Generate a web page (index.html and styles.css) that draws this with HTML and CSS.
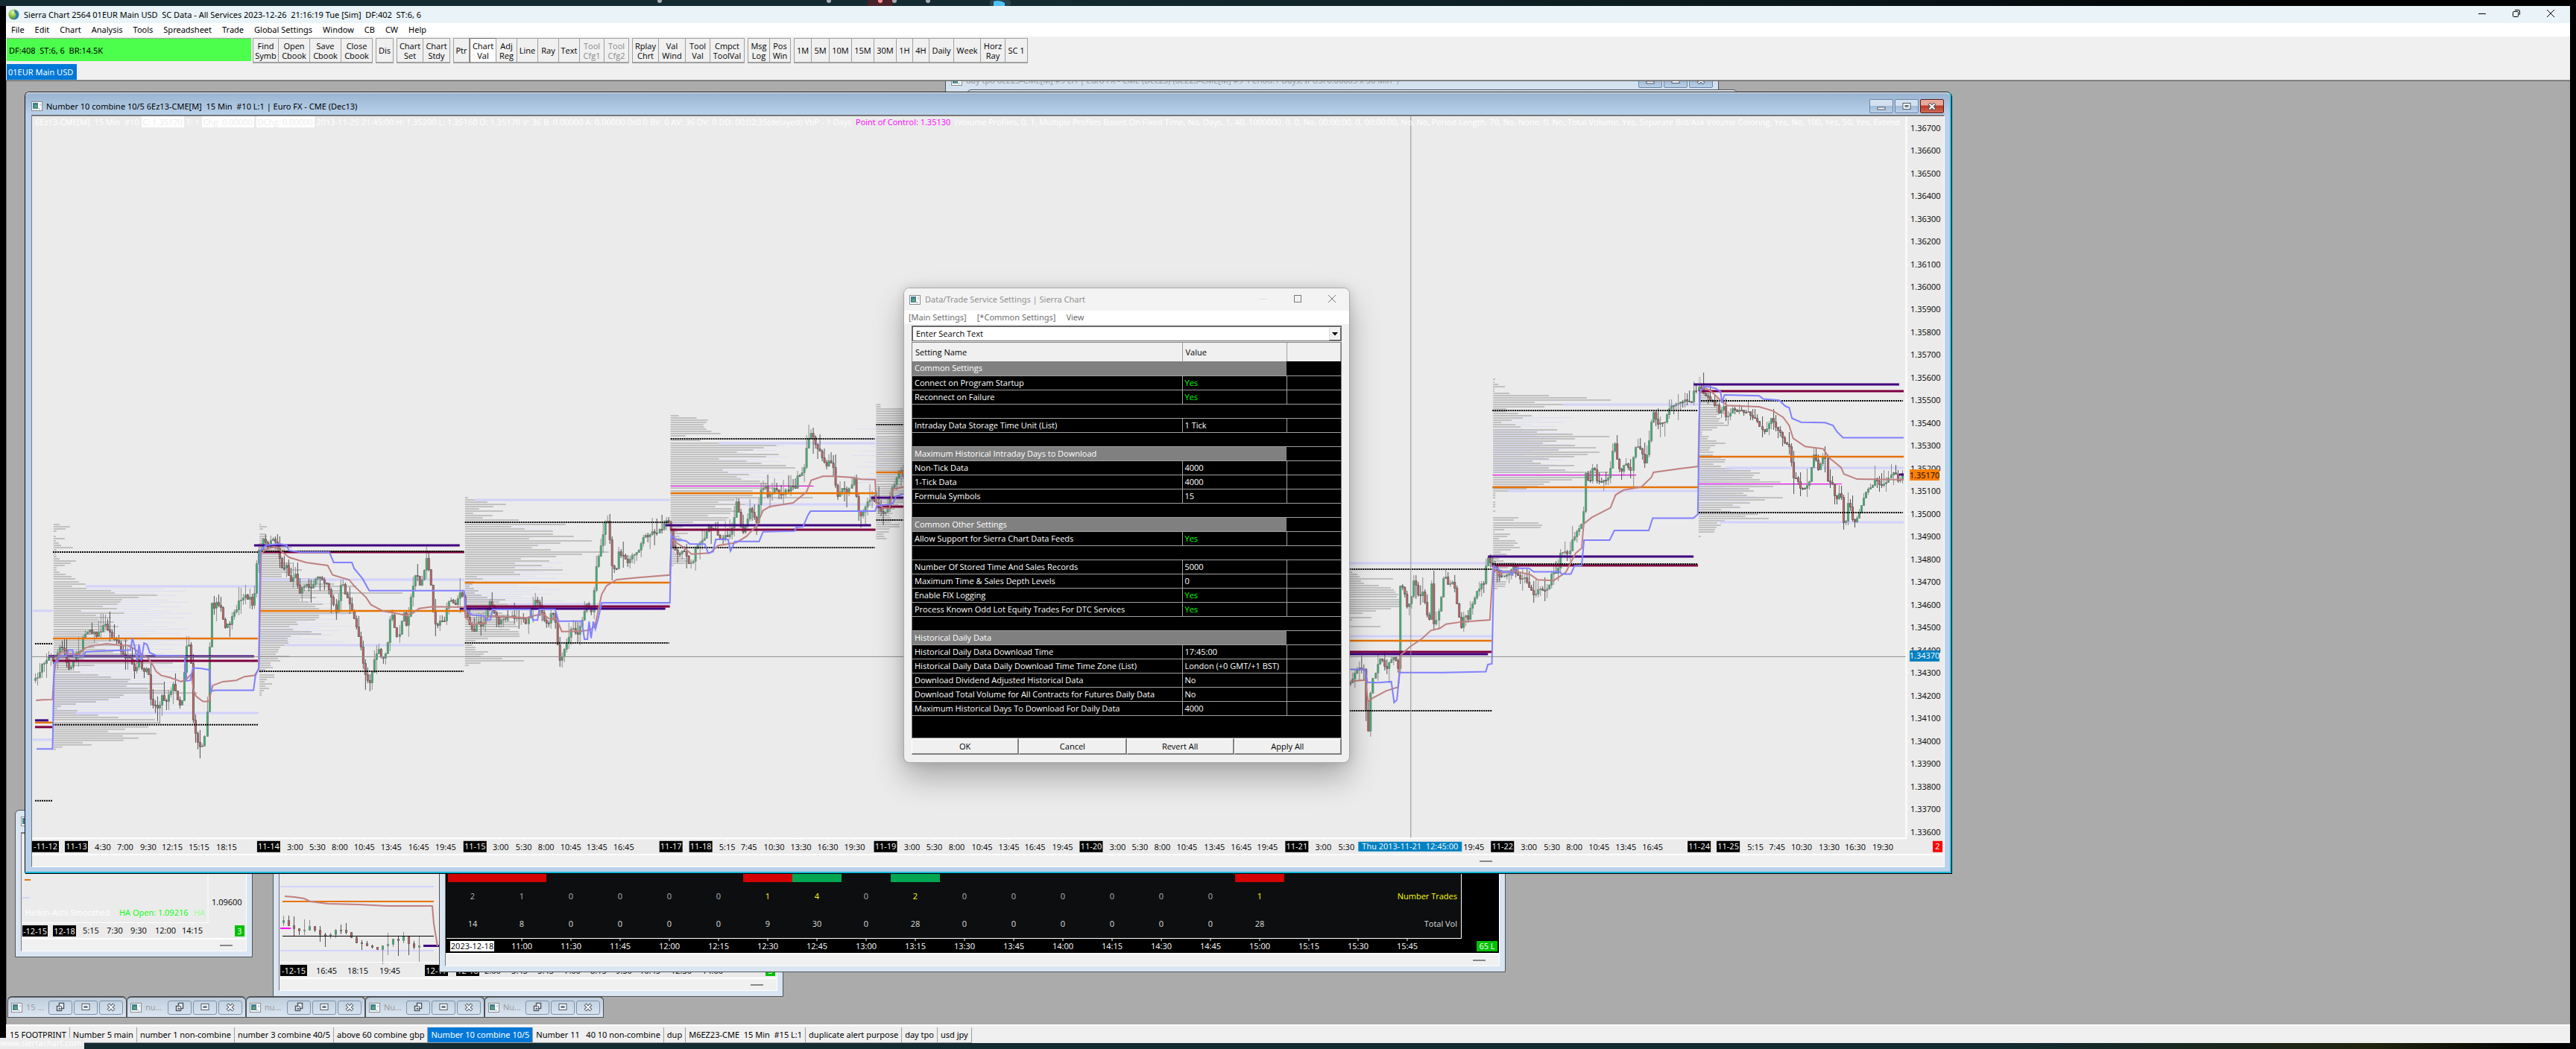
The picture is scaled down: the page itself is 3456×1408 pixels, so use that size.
FILE: index.html
```html
<!DOCTYPE html>
<html lang="en">
<head>
<meta charset="utf-8">
<title>Sierra Chart</title>
<link rel="stylesheet" href="styles.css">
</head>
<body>
<svg class="defs" aria-hidden="true">
  <symbol id="doc" viewBox="0 0 15 13"><rect x=".5" y=".5" width="14" height="12" fill="#fff" stroke="#8a8a8a"/><rect x="2" y="2" width="7" height="8" fill="#3f7f8f"/><rect x="4" y="5" width="4" height="4" fill="#5fa07c"/><path d="M11 3h2v3h-2zM9 9h3v2H9z" fill="#c9d2d8"/></symbol>
  <symbol id="restore" viewBox="0 0 14 14"><path d="M5.500 1.500h6v7h-3v3h-6v-6h3z" fill="#fff" stroke="#4c5766" stroke-width="1.500"/><path d="M5.500 5.500h3v3M5 8h1.500v1.500H5z" fill="none" stroke="#4c5766"/></symbol>
  <symbol id="max" viewBox="0 0 14 14"><rect x="2" y="2.500" width="10" height="8" fill="#fff" stroke="#4c5766"/><rect x="5" y="5.500" width="4" height="2" fill="#9fb4cc" stroke="#4c5766"/></symbol>
  <symbol id="min" viewBox="0 0 14 14"><rect x="2" y="8" width="10" height="3" fill="#fff" stroke="#4c5766"/></symbol>
  <symbol id="x" viewBox="0 0 14 14"><path d="M3 3l8 8M11 3l-8 8" stroke="#4c5766" stroke-width="4"/><path d="M3.500 3.500l7 7M10.500 3.500l-7 7" stroke="#fff" stroke-width="2"/></symbol>
</svg>
<div class="desktop-top">
  <svg width="1400" height="8" viewBox="0 0 1400 8"><rect x="1164" width="34" height="8" rx="3" fill="#4a2228"/><rect x="1328" width="28" height="8" rx="3" fill="#28434b"/><path d="M1333 2q8-3 15 2v4h-15z" fill="#4cc2ff"/><g fill="#a8aeb0"><circle cx="885" cy="1" r="3"/><circle cx="1112" cy="1" r="3"/><circle cx="1200" cy="1" r="3"/><circle cx="1245" cy="1" r="3"/></g><circle cx="1181" cy="1" r="3" fill="#ff8f8f"/></svg>
</div>
<div class="app">
  <header class="titlebar">
    <svg class="globe" viewBox="0 0 16 16"><defs><radialGradient id="gl" cx=".4" cy=".3" r=".8"><stop offset="0" stop-color="#e9f7b0"/><stop offset=".45" stop-color="#8cc63f"/><stop offset="1" stop-color="#1c5f8c"/></radialGradient></defs><circle cx="8" cy="8" r="7.500" fill="url(#gl)"/><path d="M9 1q6 2 6 7 0 4-4 7-2-3 0-5 1-3-2-5z" fill="#2d7db3"/></svg>
    <h1>Sierra Chart 2564 01EUR Main USD&nbsp; SC Data - All Services 2023-12-26&nbsp; 21:16:19 Tue [Sim]&nbsp; DF:402&nbsp; ST:6, 6</h1>
    <div class="syswin">
      <button aria-label="Minimize"><svg viewBox="0 0 12 12"><path d="M1 6.500h10" stroke="#000"/></svg></button>
      <button aria-label="Restore"><svg viewBox="0 0 12 12"><rect x="1.500" y="3.500" width="7" height="7" rx="1" fill="none" stroke="#000"/><path d="M4 1.500h5q1.500 0 1.500 1.500v5" fill="none" stroke="#000"/></svg></button>
      <button aria-label="Close"><svg viewBox="0 0 12 12"><path d="M1 1l10 10M11 1L1 11" stroke="#000"/></svg></button>
    </div>
  </header>
  <nav class="menubar"><a href="#">File</a><a href="#">Edit</a><a href="#">Chart</a><a href="#">Analysis</a><a href="#">Tools</a><a href="#">Spreadsheet</a><a href="#">Trade</a><a href="#">Global Settings</a><a href="#">Window</a><a href="#">CB</a><a href="#">CW</a><a href="#">Help</a></nav>
  <div class="toolbar">
    <div class="feed">DF:408&nbsp; ST:6, 6&nbsp; BR:14.5K</div>
    <div class="group"><button class="w35">Find<br>Symb</button><button class="w42">Open<br>Cbook</button><button class="w42">Save<br>Cbook</button><button class="w42">Close<br>Cbook</button></div>
    <div class="group"><button class="w24">Dis</button></div>
    <div class="group"><button class="w36">Chart<br>Set</button><button class="w36">Chart<br>Stdy</button></div>
    <div class="group"><button class="w22">Ptr</button><button class="w36 pressed">Chart<br>Val</button><button class="w28">Adj<br>Reg</button><button class="w28">Line</button><button class="w28">Ray</button><button class="w28">Text</button><button class="w32" disabled>Tool<br>Cfg1</button><button class="w32" disabled>Tool<br>Cfg2</button></div>
    <div class="group"><button class="w36">Rplay<br>Chrt</button><button class="w36">Val<br>Wind</button><button class="w32">Tool<br>Val</button><button class="w46">Cmpct<br>ToolVal</button></div>
    <div class="group"><button class="w30">Msg<br>Log</button><button class="w28">Pos<br>Win</button></div>
    <div class="group"><button class="w24">1M</button><button class="w24">5M</button><button class="w30">10M</button><button class="w30">15M</button><button class="w30">30M</button><button class="w22">1H</button><button class="w22">4H</button><button class="w32">Daily</button><button class="w36">Week</button><button class="w32">Horz<br>Ray</button><button class="w30">SC 1</button></div>
  </div>
  <div class="booktabs"><button>01EUR Main USD</button></div>

  <main class="mdi">
    <section class="win tpo">
      <div class="caption"><svg class="ic"><use href="#doc"/></svg><span>day tpo 6EZ23-CME[M] #9 LH | Euro FX - CME (Dec23) (6EZ23-CME[M] #9&nbsp; Period:1 Days, IPUSF0.00005 x 30 Min&nbsp; )</span><div class="ctl"><button aria-label="Minimize"><svg><use href="#min"/></svg></button><button aria-label="Maximize"><svg><use href="#max"/></svg></button><button aria-label="Close"><svg><use href="#x"/></svg></button></div></div>
    </section>
    <section class="win edge"></section>

    <section class="win heikin">
      <div class="caption"><svg class="ic"><use href="#doc"/></svg></div>
      <div class="client">
        <svg class="plot" id="heikin" viewBox="29 1119 301 140"></svg>
        <div class="foot"><i></i></div>
      </div>
    </section>

    <section class="win small">
      <div class="client">
        <svg class="plot" id="small" viewBox="375 1172 667 140"></svg>
        <div class="foot"><i></i></div>
      </div>
    </section>

    <section class="win numbers">
      <div class="client">
        <svg class="plot" id="numbers" viewBox="598 1172 1413 107"></svg>
        <div class="foot"><i></i></div>
      </div>
    </section>

    <section class="win main">
      <div class="caption"><svg class="ic"><use href="#doc"/></svg><span>Number 10 combine 10/5 6Ez13-CME[M]&nbsp; 15 Min&nbsp; #10 L:1 | Euro FX - CME (Dec13)</span><div class="ctl"><button aria-label="Minimize"><svg><use href="#min"/></svg></button><button aria-label="Maximize"><svg><use href="#max"/></svg></button><button class="close" aria-label="Close"><svg><use href="#x"/></svg></button></div></div>
      <div class="client">
        <svg class="plot" id="chart" viewBox="43 156 2566 990"></svg>
        <div class="info">6Ez13-CME[M]&nbsp; 15 Min&nbsp; #10 <mark>C: 1.35170</mark> T: 1 <mark>Chg: 0.00000</mark> <mark>DChg: 0.00000</mark> 2013-11-25 21:45:00 H: 1.35200 L: 1.35160 O: 1.35170 V: 36 B: 0.00000 A: 0.00000 0x0 0 BV: 0 AV: 36 DV: 0 DD: 00:02:35(delayed) VbP - 1 Days&nbsp; <b>Point of Control: 1.35130</b>&nbsp; (Volume Profiles, 0, 1, Multiple Profiles Based On Fixed Time, No, Days, 1, 40, 1000000, 0, 0, No, 00:00:00, 0, 00:00:00, No, No, Period Length, 70, No, None, 0, No, Total Volume, Yes, Separate Bid/Ask Volume Coloring, Yes, No, 100, Yes, 50, Yes, Extend</div>
        <div class="foot"><i></i></div>
      </div>
    </section>

    <div class="iconized">
      <div class="mini"><svg class="ic"><use href="#doc"/></svg><span>15 ...</span><button aria-label="Restore"><svg><use href="#restore"/></svg></button><button aria-label="Maximize"><svg><use href="#max"/></svg></button><button aria-label="Close"><svg><use href="#x"/></svg></button></div>
      <div class="mini"><svg class="ic"><use href="#doc"/></svg><span>nu...</span><button aria-label="Restore"><svg><use href="#restore"/></svg></button><button aria-label="Maximize"><svg><use href="#max"/></svg></button><button aria-label="Close"><svg><use href="#x"/></svg></button></div>
      <div class="mini"><svg class="ic"><use href="#doc"/></svg><span>nu...</span><button aria-label="Restore"><svg><use href="#restore"/></svg></button><button aria-label="Maximize"><svg><use href="#max"/></svg></button><button aria-label="Close"><svg><use href="#x"/></svg></button></div>
      <div class="mini"><svg class="ic"><use href="#doc"/></svg><span>Nu...</span><button aria-label="Restore"><svg><use href="#restore"/></svg></button><button aria-label="Maximize"><svg><use href="#max"/></svg></button><button aria-label="Close"><svg><use href="#x"/></svg></button></div>
      <div class="mini"><svg class="ic"><use href="#doc"/></svg><span>Nu...</span><button aria-label="Restore"><svg><use href="#restore"/></svg></button><button aria-label="Maximize"><svg><use href="#max"/></svg></button><button aria-label="Close"><svg><use href="#x"/></svg></button></div>
    </div>

    <section class="dialog" role="dialog" aria-label="Data/Trade Service Settings">
      <div class="dtitle"><svg class="ic"><use href="#doc"/></svg><h2>Data/Trade Service Settings | Sierra Chart</h2>
        <button aria-label="Minimize"><svg viewBox="0 0 12 12"><path d="M1 6.500h10" stroke="#ddd"/></svg></button>
        <button aria-label="Maximize"><svg viewBox="0 0 12 12"><rect x="1.500" y="1.500" width="9" height="9" fill="none" stroke="#777"/></svg></button>
        <button aria-label="Close"><svg viewBox="0 0 12 12"><path d="M1 1l10 10M11 1L1 11" stroke="#777"/></svg></button></div>
      <nav class="dmenu"><a href="#">[Main Settings]</a><a href="#">[*Common Settings]</a><a href="#">View</a></nav>
      <div class="dbody">
        <div class="combo"><input type="text" value="Enter Search Text" aria-label="Search settings"><button aria-label="Show searches"><svg viewBox="0 0 8 5"><path d="M0 0h8L4 4.500z"/></svg></button></div>
        <div class="tablebox">
        <table>
          <colgroup><col class="c1"><col class="c2"><col></colgroup>
          <thead><tr><th>Setting Name</th><th>Value</th><th></th></tr></thead>
          <tbody>
          <tr class="sec"><td colspan="2">Common Settings</td><td></td></tr>
          <tr><td>Connect on Program Startup</td><td class="yes">Yes</td><td></td></tr>
          <tr><td>Reconnect on Failure</td><td class="yes">Yes</td><td></td></tr>
          <tr><td colspan="3"></td></tr>
          <tr><td>Intraday Data Storage Time Unit (List)</td><td>1 Tick</td><td></td></tr>
          <tr><td colspan="3"></td></tr>
          <tr class="sec"><td colspan="2">Maximum Historical Intraday Days to Download</td><td></td></tr>
          <tr><td>Non-Tick Data</td><td>4000</td><td></td></tr>
          <tr><td>1-Tick Data</td><td>4000</td><td></td></tr>
          <tr><td>Formula Symbols</td><td>15</td><td></td></tr>
          <tr><td colspan="3"></td></tr>
          <tr class="sec"><td colspan="2">Common Other Settings</td><td></td></tr>
          <tr><td>Allow Support for Sierra Chart Data Feeds</td><td class="yes">Yes</td><td></td></tr>
          <tr><td colspan="3"></td></tr>
          <tr><td>Number Of Stored Time And Sales Records</td><td>5000</td><td></td></tr>
          <tr><td>Maximum Time &amp; Sales Depth Levels</td><td>0</td><td></td></tr>
          <tr><td>Enable FIX Logging</td><td class="yes">Yes</td><td></td></tr>
          <tr><td>Process Known Odd Lot Equity Trades For DTC Services</td><td class="yes">Yes</td><td></td></tr>
          <tr><td colspan="3"></td></tr>
          <tr class="sec"><td colspan="2">Historical Daily Data</td><td></td></tr>
          <tr><td>Historical Daily Data Download Time</td><td>17:45:00</td><td></td></tr>
          <tr><td>Historical Daily Data Daily Download Time Time Zone (List)</td><td>London (+0 GMT/+1 BST)</td><td></td></tr>
          <tr><td>Download Dividend Adjusted Historical Data</td><td>No</td><td></td></tr>
          <tr><td>Download Total Volume for All Contracts for Futures Daily Data</td><td>No</td><td></td></tr>
          <tr><td>Maximum Historical Days To Download For Daily Data</td><td>4000</td><td></td></tr>
          </tbody>
        </table>
        </div>
        <div class="dbuttons"><button>OK</button><button>Cancel</button><button>Revert All</button><button>Apply All</button></div>
      </div>
    </section>
  </main>

  <nav class="charttabs"><button>15 FOOTPRINT</button><button>Number 5 main</button><button>number 1 non-combine</button><button>number 3 combine 40/5</button><button>above 60 combine gbp</button><button class="on">Number 10 combine 10/5</button><button>Number 11&nbsp;&nbsp; 40 10 non-combine</button><button>dup</button><button>M6EZ23-CME&nbsp; 15 Min&nbsp; #15 L:1</button><button>duplicate alert purpose</button><button>day tpo</button><button>usd jpy</button></nav>
</div>
<div class="desktop-bottom"></div>
<div class="linktip">www.sierrachart.com</div>
<script src="charts.js"></script>
</body>
</html>
```
FILE: styles.css
```css
* { box-sizing: border-box; }
body {
  margin: 0;
  min-height: 100vh;
  display: flex;
  flex-direction: column;
  background: #000;
  color: #000;
  font: 11px/14px "Open Sans", "Noto Sans", sans-serif;
  overflow: hidden;
}
button, input { font: inherit; color: inherit; }
button { padding: 0; border: 0; background: none; }
a { color: inherit; text-decoration: none; }
h1, h2 { margin: 0; font: inherit; }
.defs { position: absolute; width: 0; height: 0; }
.titlebar, .menubar, .feed, .caption, .charttabs, .booktabs, .dtitle, .dmenu, .linktip { font-family: "Noto Sans", "Open Sans", sans-serif; }

.desktop-top { height: 8px; background: linear-gradient(90deg, #132b31 0 40%, #0a181c 70%, #000 90%); }
.desktop-top svg { display: block; }
.desktop-bottom { height: 8px; background: linear-gradient(90deg, #132b31 0 78%, #20240f 92%, #000 99%); }
.app {
  flex: 1;
  margin: 0 8px;
  display: flex;
  flex-direction: column;
  background: #f0f0f0;
}
.titlebar {
  height: 23px;
  display: flex;
  align-items: center;
  gap: 6px;
  padding: 0 3px;
  background: #eaf4f8;
}
.titlebar h1 { flex: 1; }
.globe { width: 15px; height: 15px; }
.syswin { display: flex; }
.syswin button { width: 46px; height: 20px; }
.syswin svg { width: 12px; height: 12px; }
.menubar { height: 18px; display: flex; background: #fff; line-height: 18px; }
.menubar a { padding: 0 7px; }

.toolbar { height: 36px; padding: 2px 0 0 1px; display: flex; gap: 4px; }
.feed { width: 328px; height: 31px; padding-left: 3px; line-height: 31px; background: #4cff4c; border-top: 1px solid #a0a0a0; margin-right: -2px; }
.group { display: flex; height: 34px; }
.group button {
  border-top: 1px solid #a0a0a0;
  border-bottom: 2px solid #a0a0a0;
  border-right: 1px solid #a0a0a0;
  line-height: 13px;
  text-align: center;
  white-space: nowrap;
}
.group button:first-child { border-left: 1px solid #a0a0a0; }
.group button:disabled { color: #8a8a8a; }
.group .pressed { background: #fbfbfb; border-left: 1px solid #696969; border-top-color: #696969; }
.w22 { width: 22px; } .w24 { width: 24px; } .w28 { width: 28px; } .w30 { width: 30px; }
.w32 { width: 33px; } .w35 { width: 35px; } .w36 { width: 36px; } .w42 { width: 42px; } .w46 { width: 46px; }

.booktabs { height: 23px; padding: 1px; border-bottom: 1px solid #a0a0a0; }
.booktabs button { height: 21px; padding: 0 5px 0 2px; background: #0078d7; color: #fff; }

.mdi { flex: 1; position: relative; overflow: hidden; background: #ababab; border: 1px solid #696969; border-width: 1px 0 0 1px; }
.win { position: absolute; display: flex; flex-direction: column; border: 1px solid #505458; border-radius: 6px 6px 0 0; background: #d9e5f2; padding: 0 7px 7px; }
.caption { display: flex; align-items: center; gap: 5px; }
.caption span { flex: 1; white-space: nowrap; }
.ic { width: 15px; height: 13px; flex: none; }
.ctl { display: flex; gap: 2px; }
.ctl button { width: 32px; height: 19px; border: 1px solid #6d84a3; border-radius: 2px; background: linear-gradient(#d3e0ef 45%, #a4bcd8 50%, #b9cfe7); display: flex; justify-content: center; align-items: center; }
.ctl .close { background: linear-gradient(#e9a99a 40%, #b93a26 50%, #cf6a52); border-color: #5c1a1e; }
.ctl svg { width: 14px; height: 14px; }
.client { flex: 1; min-height: 0; position: relative; display: flex; flex-direction: column; border: 1px solid #fff; border-top: 2px solid #777; border-left-color: #777; background: #ebebeb; }
.plot { flex: 1; min-height: 0; width: 100%; display: block; }
.plot text { font: 11px "Open Sans", "Noto Sans", sans-serif; }
.foot { flex: none; height: 17px; border-top: 2px solid #fff; background: #f0f0f0; display: flex; justify-content: flex-end; align-items: center; padding-right: 18px; }
.foot i { width: 17px; height: 2px; background: #888; }

.main { left: 24px; top: 14px; width: 2585px; height: 1049px; border-color: #111; border-right: 2px solid #18b8d8; border-bottom: 2px solid #18b8d8; background: #b9d1ea; box-shadow: 1px 1px 0 #000; padding: 0 7px 6px 8px; }
.main .caption { height: 30px; margin: 0 -7px 0 -8px; padding: 6px 8px 0; background: linear-gradient(#99b4d1, #b9d1ea); border-radius: 5px 5px 0 0; border-top: 1px solid #fff; }
.main .foot { padding-right: 606px; }
.info { position: absolute; top: 0; left: 4px; width: 2510px; height: 15px; line-height: 15px; overflow: hidden; white-space: nowrap; color: #fff; }
.info mark { display: inline-block; padding: 0 2px; background: #fff; color: #ebebeb; }
.info b { font-weight: 400; color: #f0f; }

.tpo { left: 1259px; top: -14px; width: 1038px; height: 60px; color: #999; background: #d4e1ef; }
.tpo .caption { height: 24px; }
.edge { left: 1288px; top: 11px; width: 1034px; height: 40px; }
.heikin { left: 11px; top: 978px; width: 319px; height: 198px; }
.heikin .caption { height: 29px; }
.small { left: 357px; top: 1040px; width: 685px; height: 189px; }
.numbers { left: 580px; top: 1040px; width: 1431px; height: 156px; }
.numbers .client { background: #000; }
.small .client, .numbers .client { border-top: 0; margin-top: 22px; }

.iconized { position: absolute; left: 1px; bottom: 9px; display: flex; }
.mini { width: 160px; height: 29px; display: flex; align-items: center; padding: 0 4px; gap: 2px; color: #999; background: linear-gradient(#bfcddb, #dbe6f2); border: 1px solid #505458; border-top-width: 2px; border-radius: 6px 6px 0 0; }
.mini span { flex: 1; padding-left: 3px; }
.mini button { width: 32px; height: 19px; border: 1px solid #7c92ae; border-radius: 3px; display: flex; align-items: center; justify-content: center; }
.mini button svg { width: 14px; height: 14px; }

.dialog { position: absolute; left: 1203px; top: 277px; width: 599px; display: flex; flex-direction: column; background: #f0f0f0; border: 1px solid #a8a8a8; border-radius: 8px; overflow: hidden; box-shadow: 0 20px 40px rgba(0,0,0,.28), 0 0 14px rgba(0,0,0,.12); }
.dtitle { height: 30px; display: flex; align-items: center; padding-left: 7px; background: #f3f3f3; color: #909090; }
.dtitle h2 { flex: 1; padding-left: 6px; }
.dtitle button { width: 46px; height: 28px; }
.dtitle button svg { width: 12px; height: 12px; }
.dmenu { height: 18px; padding-left: 6px; display: flex; gap: 14px; background: #fff; color: #6d6d6d; line-height: 18px; }
.dbody { padding: 2px 10px 10px; }
.combo { height: 21px; display: flex; border: 1px solid #696969; border-width: 2px 1px 1px 2px; background: #fff; margin-bottom: 1px; }
.combo input { flex: 1; min-width: 0; border: 0; padding: 0 4px; outline: 0; background: none; }
.combo button { width: 16px; background: #f0f0f0; border: 1px solid #696969; border-top-color: #fff; border-left-color: #ddd; display: grid; place-items: center; }
.combo svg { width: 8px; height: 5px; }
.tablebox { height: 532px; border: 1px solid #808080; background: #000; }
table { width: 100%; border-collapse: collapse; table-layout: fixed; color: #fff; }
.c1 { width: 362px; } .c2 { width: 140px; }
th { height: 25px; padding: 0 4px; background: #f0f0f0; color: #000; font-weight: 400; text-align: left; border-right: 1px solid #a0a0a0; }
td { height: 19px; padding: 0 3px; border-bottom: 1px solid #a0a0a0; border-right: 1px solid #a0a0a0; white-space: nowrap; line-height: 14px; }
td:last-child { border-right: 0; }
.sec td:first-child { background: #808080; border-right: 0; }
.yes { color: #0f0; }
.dbuttons { display: flex; }
.dbuttons button { flex: 1; height: 22px; background: #f0f0f0; border: 1px solid #fff; border-right: 2px solid #808080; border-bottom: 2px solid #808080; }

.charttabs { height: 25px; padding: 2px 0 0 1px; display: flex; border-top: 2px solid #fff; }
.charttabs button { padding: 0 4px; border-right: 1px solid #a0a0a0; border-bottom: 1px solid #a0a0a0; }
.charttabs .on { background: #0078d7; color: #fff; }
.linktip { position: absolute; left: 0; bottom: 0; height: 15px; width: 113px; background: #ebebeb; color: #fff; }
```
FILE: charts.js
```js
const NS = 'http://www.w3.org/2000/svg';
let seed = 7;
const rnd = () => (seed = (seed * 16807) % 2147483647) / 2147483647;

function el(svg, name, attrs, text) {
  const e = document.createElementNS(NS, name);
  for (const k in attrs) e.setAttribute(k, attrs[k]);
  if (text !== undefined) e.textContent = text;
  svg.appendChild(e);
  return e;
}
const path = (svg, d, color, w, dash) =>
  el(svg, 'path', { d, stroke: color, 'stroke-width': w, fill: 'none', 'stroke-dasharray': dash || 'none' });
const rect = (svg, x, y, w, h, fill) => el(svg, 'rect', { x, y, width: w, height: h, fill });
const label = (svg, x, y, t, fill = '#000', anchor = 'middle') =>
  el(svg, 'text', { x, y: y + 4, fill, 'text-anchor': anchor }, t);
function tag(svg, x, y, w, h, t, bg, fg) {
  rect(svg, x, y, w, h, bg);
  label(svg, x + w / 2, y + h / 2, t, fg);
}

// Blocks of the series keep their own units: origin plus scale.
const A = { x: 0, y: 640, sx: 2.24, sy: 3 };
const B = { x: 600, y: 520, sx: 2.24, sy: 2.45 };
const C = { x: 1780, y: 480, sx: 1.867, sy: 2.306 };
const pts = (b, s) => s.trim().split(/[;\s]+/).map(p => {
  const [x, y] = p.split(',').map(Number);
  return [b.x + x / b.sx, b.y + y / b.sy];
});
const line = (svg, p, color, w) => path(svg, 'M' + p.map(q => q.map(n => n.toFixed(1)).join(' ')).join('L'), color, w);

function candles(svg, p, step, noise) {
  let up = '', down = '', wu = '', wd = '', i = 0, prev = Math.round(p[0][1]);
  for (let x = p[0][0]; x < p[p.length - 1][0]; x += step) {
    while (i < p.length - 2 && p[i + 1][0] < x) i++;
    const t = Math.min(1, Math.max(0, (x - p[i][0]) / (p[i + 1][0] - p[i][0])));
    const c = Math.round(p[i][1] + t * (p[i + 1][1] - p[i][1]) + (rnd() - .5) * noise);
    const top = Math.min(prev, c), h = Math.max(1, Math.abs(c - prev));
    const hi = top - Math.round(rnd() * rnd() * 24), lo = top + h + Math.round(rnd() * rnd() * 24);
    const X = Math.round(x);
    const box = `M${X - .5} ${top + .5}h2v${h}h-2z`, wick = `M${X + .5} ${hi}V${lo}`;
    if (c < prev) { up += box; wu += wick; } else { down += box; wd += wick; }
    prev = c;
  }
  path(svg, wu, '#8c8c8c', 1);
  path(svg, wd, '#505050', 1);
  el(svg, 'path', { d: up, fill: '#00d060', stroke: '#808080', 'stroke-width': 1 });
  el(svg, 'path', { d: down, fill: '#ff6464', stroke: '#5c5c5c', 'stroke-width': 1 });
}

function profile(svg, b, X0, Y0, s, step) {
  const x0 = b.x + X0 / b.sx;
  let d = '';
  s.trim().split(/\s+/).forEach((v, i) => {
    if (+v) d += `M${x0} ${Math.round(b.y + Y0 / b.sy + i * step)}h${v}`;
  });
  path(svg, d, '#c0c0c0', 2);
}

const g = document.getElementById('chart');
const T = 3.048;

// Value-area shading across the busiest rows.
let shade = '';
[[72, 260, 790, 960], [348, 470, 780, 862], [624, 760, 704, 808], [900, 1060, 598, 676], [1176, 1212, 572, 668], [2004, 2110, 560, 655], [2280, 2360, 630, 700]]
  .forEach(([a, b, t, e]) => { for (let y = t; y < e; y += 3) shade += `M${a} ${y + .5}H${b - ((y * 37) % 70)}`; });
path(g, shade, 'rgba(208,208,255,.5)', 1);

profile(g, A, 161, 193, '8 22 16 4 0 3 15 3 7 10 26 4 3 3 4 8 30 23 15 4 4 8 16 24 29 34 43 25 44 77 82 139 114 92 90 86 66 85 37 95 57 77 60 81 61 87 79 70 60 45 142 100 60 112 55 70 80 120 60 40 50 160 55 25 25 36 60 77 103 100 148 98 127 155 193 94 89 74 57 30 10 5 32 108 60 87 136 143 129 127 96 73 138 93 114 94 39 51 12 3', T);
profile(g, A, 780, 193, '2 10 5 0 8 10 8 12 12 20 43 35 28 28 30 28 28 44 40 40 57 44 30 30 85 76 100 130 60 110 192 70 76 54 66 85 75 80 100 130 80 80 75 50 52 40 45 70 83 42 38 38 39 34 28 26 25 22 40 25 28 15 15 18 8 3 20 20 10 7 17 8 13 6 3 3', T);
profile(g, B, 54, 362, '4 14 30 55 38 19 51 11 37 24 72 60 135 62 80 118 118 146 86 170 128 98 90 115 193 157 122 75 113 67 103 67 131 66 74 16 24 12 10 6 12 18 13 22 30 54 46 58 60 50 40 50 60 70 60 66 68 71 60 72 73 73 31 14 0 10 14 14 31 25 21 50 79 21 5', T);
profile(g, B, 672, 93, '11 35 50 48 44 45 48 55 67 20 0 40 65 142 125 111 89 145 128 65 102 122 155 167 70 77 105 89 95 120 130 190 140 110 130 110 191 86 64 110 60 82 92 80 50 78 75 30 0 16 8 9 23 12 15 14 0 9 5 8 6 10 12 20 22 20 4', T);
profile(g, B, 1290, 56, '6 6 36 40 40 38 40 40 40 40 40 40 40 40 40 40 40 40 40 40 40 40 40 40 40 40 40 40 40 40 40 36 40 38 40 35 40 30 40 36 34 30 36 38 30 28 25 20 22 18 20 26 20 31 31 18 17 10 11 14', T);
profile(g, C, 50, 664, '8 15 18 63 20 24 44 60 64 66 70 68 74 72 72 74 60 40 22 0 34 8 0 0 46', T);
profile(g, C, 418, 68, '3 2 7 16 2 2 22 75 126 158 56 94 69 18 18 34 52 40 25 11 30 37 86 59 107 156 110 85 67 110 138 88 143 127 109 75 53 64 109 75 97 155 192 134 106 76 68 60 45 20 3 3 3 0 3 3 3 0 3 0 0 34 28 61 66 64 15 2 23 19 8 30 33 28 36 24 10 18 0 8 14 30 26 20 26 30 28 12 10 18 17 16 6', T);
profile(g, C, 933, 62, '3 3 3 3 8 10 8 15 16 18 20 25 25 25 26 30 28 24 29 27 34 40 25 18 5 5 14 12 24 36 22 16 14 20 19 30 36 35 20 30 45 70 82 74 72 82 110 187 100 68 74 60 65 113 89 69 46 56 30 43 80 63 94 35 25 30 24 22 21 0 3', T);

const H = (x1, x2, y, kind) => {
  const k = { lav: ['#d2d2fb', 3], dot: ['#000', 2, '2 1'], or: ['#e67300', 2.5], mar: ['#800040', 3], pur: ['#400080', 3], mag: ['#f0f', 1] }[kind];
  path(g, `M${x1} ${y}H${x2}`, k[0], k[1], k[2]);
};
[[44,71,820],[44,71,993],[115,347,787],[102,347,957],[348,623,778],[383,623,866],[638,899,671],[683,899,811],[965,1175,595],[1000,1175,677],[1811,2003,756],[1811,2003,854],[2098,2279,543],[2024,2279,659],[2316,2555,628],[2308,2555,701]]
  .forEach(a => H(...a, 'lav'));
[[900,1092,652.5],[2003,2196,637.5],[2280,2472,649.5]].forEach(a => H(...a, 'mag'));

candles(g, pts(A, '105,820;115,800;125,750;150,720;165,745;178,690;192,690;205,780;222,740;230,690;240,700;250,640;265,610;290,640;315,590;330,630;345,655;355,660;365,715;390,735;405,790;418,740;432,790;442,760;450,880;460,915;475,930;485,880;497,905;510,860;520,840;540,915;550,890;557,680;568,670;578,800;582,1045;590,1040;600,1090;612,1070;618,1000;625,880;632,500;645,535;650,490;662,530;675,610;690,590;705,545;720,490;735,480;750,490;762,520;768,400;775,290;782,310;795,235;805,290;818,240;835,290;845,370;862,350;870,430;885,385;900,460;915,430;930,445;960,400;985,430;1000,500;1010,550;1025,420;1040,480;1052,510;1060,560;1080,650;1095,780;1110,835;1120,770;1135,690;1150,740;1165,680;1175,530;1190,640;1200,640;1210,530;1222,600;1232,500;1250,370;1260,440;1272,400;1282,320;1292,400;1300,530;1312,605;1325,570;1335,580;1350,490;1368,510;1385,460;1395,520')
  .concat(pts(B, '56,750;65,770;78,805;90,760;100,790;115,750;130,695;142,740;152,775;170,765;185,745;210,755;225,750;238,790;252,720;268,695;280,730;290,760;300,790;315,730;325,780;337,900;345,890;352,860;362,830;375,790;395,810;410,740;420,710;435,740;445,600;455,540;465,500;475,430;485,450;492,570;505,610;515,545;540,570;555,560;575,530;592,490;620,475;640,470;660,425;667,450;672,480;680,530;690,550;710,540;728,580;740,570;748,520;762,500;775,490;785,460;800,455;815,490;845,490;860,440;870,370;885,480;900,440;912,390;930,440;942,340;955,320;965,360;985,335;1000,350;1015,345;1035,320;1045,330;1052,290;1070,285;1078,210;1090,140;1105,180;1125,220;1140,260;1150,240;1162,270;1172,360;1185,330;1200,345;1225,300;1232,400;1245,420;1265,370;1285,370;1295,395;1310,410;1325,400;1335,330;1350,300;1365,265;1372,290')), 3.035, 6);
candles(g, pts(C, '60,1010;70,975;85,960;95,970;100,1100;107,1170;112,1010;120,980;135,930;150,970;160,930;175,930;181,970;184,710;195,720;203,775;212,740;220,680;232,740;242,730;258,820;264,700;270,830;285,760;293,670;305,700;318,690;328,770;338,840;346,780;354,810;365,760;380,720;395,690;404,610;412,640;420,645;435,680;450,675;467,640;480,680;500,680;515,730;535,720;558,710;565,665;580,660;588,590;605,610;620,550;635,520;643,500;647,350;658,400;668,330;680,390;700,375;708,375;716,300;722,265;735,350;752,330;762,360;772,280;785,280;798,330;810,240;817,155;830,210;850,190;862,150;890,130;915,145;922,100;935,90;945,105;960,130;980,150;988,180;993,130;1002,195;1015,160;1040,160;1060,170;1075,190;1095,230;1115,190;1130,215;1148,270;1160,270;1168,360;1180,380;1190,415;1210,380;1222,300;1235,350;1248,290;1255,375;1268,395;1275,450;1288,400;1297,540;1308,440;1320,510;1335,480;1345,440;1360,400;1375,380;1390,400;1410,370;1420,350;1435,390;1444,360'), 3.035, 6);

[[47,71,970],[71,346,857],[348,623,820],[624,899,782],[900,1175,662],[1176,1215,634],[1811,2002,860],[2003,2279,654],[2280,2555,613]].forEach(a => H(...a, 'or'));
[[47,71,976],[71,346,887],[353,623,741],[624,899,814],[900,1175,711],[1176,1215,680],[1811,2002,875],[2003,2279,759],[2280,2555,525]].forEach(a => H(...a, 'mar'));
[[47,65,967],[65,341,881],[341,617,732],[617,893,817],[893,1169,705],[1169,1215,668],[1811,1997,878],[1997,2273,747],[2273,2549,516],[2549,2555,637]].forEach(a => H(...a, 'pur'));
[[47,70,864],[47,70,1075],[71,346,741],[71,346,973],[348,622,740],[348,622,901],[624,898,701],[624,898,863],[900,1174,589],[900,1174,735],[1176,1215,570],[1176,1215,698],[1811,2002,764],[1811,2002,954],[2003,2278,551],[2003,2278,757],[2280,2554,538],[2280,2554,688]].forEach(a => H(...a, 'dot'));

line(g, pts(A, '108,900;130,898;158,897;162,800;170,730;185,705;205,712;238,715;255,690;280,680;320,672;360,678;385,680;400,690;420,710;445,730;460,760;470,785;485,800;510,808;545,825;560,815;575,795;582,860;590,885;610,905;628,905;634,870;640,840;670,825;710,820;735,805;765,800;778,775;785,310;800,290;830,282;850,305;870,325;920,345;985,357;1000,395;1050,415;1065,440;1100,485;1115,515;1150,540;1200,552;1220,558;1240,550;1260,530;1300,523;1395,525')
  .concat(pts(B, '56,755;75,780;115,775;125,752;240,758;265,750;290,745;305,760;330,762;345,803;400,802;430,798;445,785;455,730;465,680;480,652;510,632;580,625;670,617;674,500;695,515;710,525;735,548;790,545;815,520;870,510;900,490;930,455;950,405;970,392;1040,380;1060,362;1080,345;1095,305;1130,292;1160,292;1215,296;1245,302;1287,303;1290,380;1310,395;1330,398;1340,335;1372,328')), '#c08080', 2);
line(g, pts(C, '60,1002;98,998;105,1065;115,1055;150,1032;180,1020;187,920;210,895;240,870;262,845;285,838;300,825;340,818;410,812;418,650;432,668;470,660;512,672;530,688;570,690;600,665;625,605;640,590;645,515;665,495;712,465;725,425;745,410;790,400;815,370;820,355;890,343;932,337;936,110;945,90;965,105;990,135;1005,148;1085,152;1120,165;1145,185;1160,210;1170,250;1200,275;1245,282;1260,310;1290,340;1297,360;1330,376;1447,378'), '#c08080', 2);
line(g, pts(A, '110,1096;158,1096;163,750;172,745;180,722;200,722;205,698;218,698;222,722;248,725;258,705;325,700;392,698;398,650;406,690;412,740;418,675;425,740;433,670;442,675;450,708;470,720;555,722;560,822;572,820;580,770;605,772;630,778;634,865;645,860;762,860;768,800;778,770;782,300;800,275;840,270;862,275;868,297;900,303;990,303;1003,345;1058,345;1065,370;1090,410;1110,458;1395,458')
  .concat(pts(B, '56,730;75,748;112,752;120,765;130,765;137,730;250,730;258,765;272,765;277,730;325,730;335,769;405,769;413,828;422,828;427,770;433,825;440,770;446,795;455,758;465,708;670,708;674,485;688,500;718,505;730,515;775,515;785,545;800,540;808,500;845,500;852,538;865,507;938,507;950,475;1045,472;1050,460;1070,458;1085,420;1093,407;1287,407;1292,390;1340,382;1350,358;1372,350')), '#8080ff', 2);
line(g, pts(C, '60,965;97,965;103,1005;130,1006;163,1003;170,1068;177,1060;184,975;293,975;400,972;405,950;415,948;420,645;440,663;460,663;466,672;475,652;508,652;520,663;585,663;590,670;613,670;622,645;640,643;646,565;710,565;722,535;808,535;818,497;920,497;931,485;936,105;950,88;975,95;988,105;992,140;998,115;1085,118;1095,128;1135,132;1150,150;1160,155;1167,188;1190,200;1250,201;1270,210;1280,230;1295,248;1447,248'), '#8080ff', 2);

// Crosshair and axes
path(g, 'M43 881.5H2559M1893.5 156V1125', '#909090', 1);
path(g, 'M43 1125.500H2559M2558.500 156V1126', '#fff', 2);
for (let i = 0; i <= 31; i++) {
  const y = Math.round(171.6 + i * 30.484);
  path(g, `M2559 ${y}h3`, '#fff', 1);
  label(g, 2564, y, (1.367 - i * .001).toFixed(5), '#000', 'start');
}
tag(g, 2563, 630, 40, 15, '1.35170', '#ff8000', '#000');
tag(g, 2563, 873, 40, 15, '1.34370', '#0080c0', '#fff');
const ax = '138 4:30 168 7:00 199 9:30 231 12:15 267 15:15 304 18:15 396 3:00 426 5:30 456 8:00 489 10:45 525 13:45 562 16:45 598 19:45 672 3:00 703 5:30 733 8:00 766 10:45 801 13:45 837 16:45 976 5:15 1005 7:45 1039 10:30 1075 13:30 1111 16:30 1147 19:30 1224 3:00 1254 5:30 1284 8:00 1318 10:45 1354 13:45 1389 16:45 1426 19:45 1500 3:00 1530 5:30 1560 8:00 1593 10:45 1630 13:45 1666 16:45 1701 19:45 1776 3:00 1807 5:30 1978 19:45 2052 3:00 2083 5:30 2113 8:00 2146 10:45 2182 13:45 2218 16:45 2356 5:15 2385 7:45 2418 10:30 2455 13:30 2490 16:30 2527 19:30'.split(' ');
for (let i = 0; i < ax.length; i += 2) {
  path(g, `M${ax[i]} 1126v3`, '#fff', 1);
  label(g, +ax[i], 1137, ax[i + 1]);
}
tag(g, 43, 1129, 36, 15, '-11-12', '#000', '#fff');
[[102,'11-13'],[360,'11-14'],[637,'11-15'],[900,'11-17'],[940,'11-18'],[1188,'11-19'],[1464,'11-20'],[1740,'11-21'],[2016,'11-22'],[2280,'11-24'],[2319,'11-25']]
  .forEach(([x, t]) => tag(g, x - 15, 1129, 31, 15, t, '#000', '#fff'));
tag(g, 1823, 1130, 139, 13, 'Thu 2013-11-21\u00a0 12:45:00', '#0080c0', '#fff');
tag(g, 2594, 1129, 13, 15, '2', '#f00', '#fff');

// Heikin-Ashi window
const k = document.getElementById('heikin');
path(k, 'M29 1238.500H279V1117', '#fff', 1);
path(k, 'M33 1181h8', '#e67300', 2);
path(k, 'M30 1205h10', '#d2d2fb', 2);
label(k, 284, 1211, '1.09600', '#000', 'start');
label(k, 34, 1225, 'Heikin-Ashi Smoothed', '#fff', 'start');
label(k, 160, 1225, 'HA Open: 1.09216', '#0f0', 'start');
label(k, 260, 1225, 'HA', '#9f9', 'start');
tag(k, 30, 1242, 34, 15, '-12-15', '#000', '#fff');
tag(k, 71, 1242, 31, 15, '12-18', '#000', '#fff');
[[122,'5:15'],[154,'7:30'],[186,'9:30'],[222,'12:00'],[258,'14:15']].forEach(([x, t]) => { path(k, `M${x} 1239v3`, '#fff', 1); label(k, x, 1249, t); });
tag(k, 315, 1242, 13, 15, '3', '#00c000', '#fff');

// Small candle window
const s = document.getElementById('small');
path(s, 'M376 1190H582M376 1276H582', '#d2d2fb', 2);
path(s, 'M379 1210H582', '#e67300', 2);
candles(s, [[380,1238],[395,1245],[405,1250],[415,1244],[425,1252],[438,1256],[450,1247],[462,1250],[478,1262],[492,1271],[508,1272],[520,1265],[535,1260],[542,1253],[552,1270],[566,1270]], 7, 6);
path(s, 'M376 1246h14', '#f0f', 2);
path(s, 'M379 1256.500H582', '#000', 1);
path(s, 'M568 1269.500h22', '#400080', 3);
line(s, [[382,1203],[395,1204],[408,1206],[416,1210],[440,1213],[480,1214],[520,1216],[580,1216],[582,1240],[587,1270]], '#c08080', 2);
path(s, 'M375 1291.500H1042', '#fff', 1);
tag(s, 376, 1295, 36, 15, '-12-15', '#000', '#fff');
tag(s, 570, 1295, 31, 15, '12-17', '#000', '#fff');
tag(s, 612, 1295, 31, 15, '12-18', '#000', '#fff');
[[438,'16:45'],[480,'18:15'],[523,'19:45'],[661,'2:00'],[697,'3:45'],[732,'5:45'],[768,'7:00'],[803,'8:15'],[837,'9:30'],[872,'10:45'],[914,'12:30'],[956,'14:00']].forEach(([x, t]) => { path(s, `M${x} 1292v3`, '#fff', 1); label(s, x, 1303, t); });
tag(s, 1027, 1295, 13, 15, '3', '#00c000', '#fff');

// Numbers bars window
const n = document.getElementById('numbers');
rect(n, 599, 1172, 1361, 87, '#0c0e10');
[[601,132,'#d20000'],[997,66,'#d20000'],[1063,66,'#00a651'],[1195,66,'#00a651'],[1657,66,'#d20000']].forEach(([x, w, c]) => rect(n, x, 1172, w, 12, c));
path(n, 'M599 1259.500H1960.500V1172', '#fff', 1);
const trades = [2,1,0,0,0,0,1,4,0,2,0,0,0,0,0,0,1], vol = [14,8,0,0,0,0,9,30,0,28,0,0,0,0,0,0,28];
trades.forEach((v, i) => {
  label(n, 634 + i * 66, 1203, v, v && i > 5 ? '#ff0' : '#b4b4b4');
  label(n, 634 + i * 66, 1240, vol[i], '#ddd');
});
label(n, 1955, 1203, 'Number Trades', '#ff0', 'end');
label(n, 1955, 1240, 'Total Vol', '#ddd', 'end');
'11:00 11:30 11:45 12:00 12:15 12:30 12:45 13:00 13:15 13:30 13:45 14:00 14:15 14:30 14:45 15:00 15:15 15:30 15:45'.split(' ')
  .forEach((t, i) => { path(n, `M${700 + i * 66} 1260v3`, '#fff', 1); label(n, 700 + i * 66, 1270, t, '#fff'); });
tag(n, 604, 1263, 59, 14, '2023-12-18', '#fff', '#000');
tag(n, 1981, 1263, 28, 14, '65 L', '#00c000', '#fff');
```
